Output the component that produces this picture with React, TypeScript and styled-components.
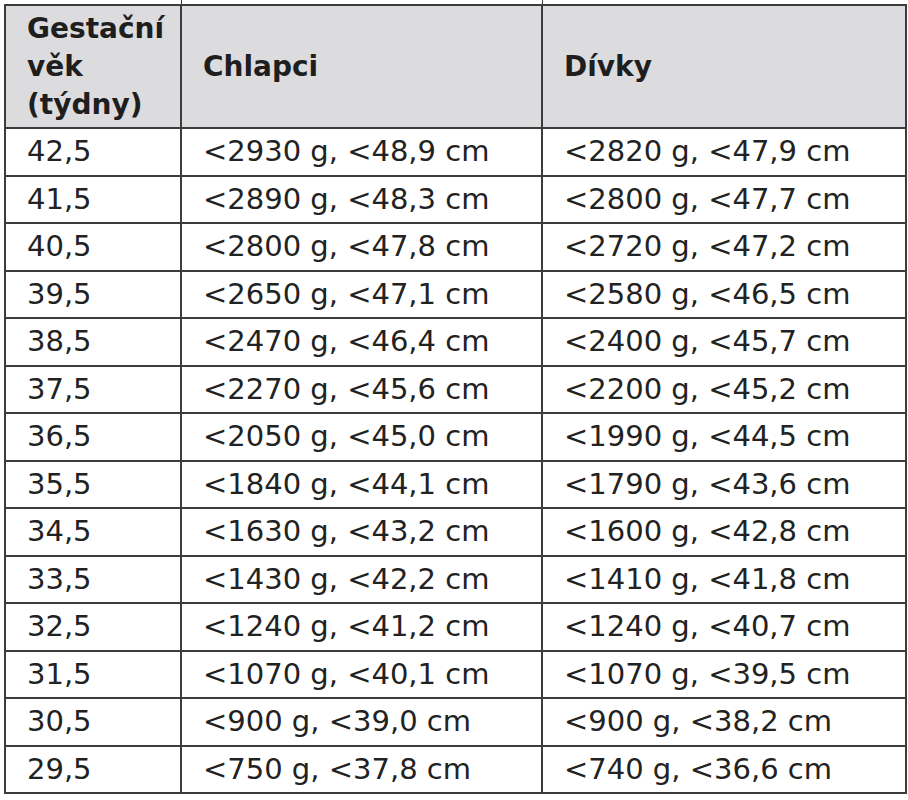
import React from 'react';
import styled, { createGlobalStyle } from 'styled-components';

const GlobalStyle = createGlobalStyle`
  html, body {
    margin: 0;
    padding: 0;
    background: #ffffff;
  }
  body {
    font-family: "DejaVu Sans", "Liberation Sans", sans-serif;
    color: #222;
  }
`;

const Page = styled.div`
  padding: 4px 0 0 4px;
`;

const Table = styled.table`
  border-collapse: collapse;
  table-layout: fixed;
  width: 901px;
`;

const HeadCell = styled.th`
  position: relative;
  background-color: #dcdcdf;
  border: 2px solid #3c3c3c;
  height: 121px;
  padding: 0 0 0 21px;
  text-align: left;
  vertical-align: middle;
  font-size: 28px;
  font-weight: 700;
  line-height: 38px;
  color: #1e1e1e;

  /* divider line runs a bit past the top edge */
  &:not(:first-child)::before {
    content: '';
    position: absolute;
    left: -1px;
    top: -6px;
    width: 1px;
    height: 6px;
    background: #3c3c3c;
  }
`;

const Cell = styled.td`
  border: 2px solid #3c3c3c;
  height: 45.5px;
  padding: 0 0 0 21px;
  font-size: 29px;
  line-height: 1;
  color: #222;
  vertical-align: middle;
  white-space: nowrap;
`;

const rows: [string, string, string][] = [
  ['42,5', '<2930 g, <48,9 cm', '<2820 g, <47,9 cm'],
  ['41,5', '<2890 g, <48,3 cm', '<2800 g, <47,7 cm'],
  ['40,5', '<2800 g, <47,8 cm', '<2720 g, <47,2 cm'],
  ['39,5', '<2650 g, <47,1 cm', '<2580 g, <46,5 cm'],
  ['38,5', '<2470 g, <46,4 cm', '<2400 g, <45,7 cm'],
  ['37,5', '<2270 g, <45,6 cm', '<2200 g, <45,2 cm'],
  ['36,5', '<2050 g, <45,0 cm', '<1990 g, <44,5 cm'],
  ['35,5', '<1840 g, <44,1 cm', '<1790 g, <43,6 cm'],
  ['34,5', '<1630 g, <43,2 cm', '<1600 g, <42,8 cm'],
  ['33,5', '<1430 g, <42,2 cm', '<1410 g, <41,8 cm'],
  ['32,5', '<1240 g, <41,2 cm', '<1240 g, <40,7 cm'],
  ['31,5', '<1070 g, <40,1 cm', '<1070 g, <39,5 cm'],
  ['30,5', '<900 g, <39,0 cm', '<900 g, <38,2 cm'],
  ['29,5', '<750 g, <37,8 cm', '<740 g, <36,6 cm'],
];

export default function App() {
  return (
    <Page>
      <GlobalStyle />
      <Table>
        <colgroup>
          <col style={{ width: 176 }} />
          <col style={{ width: 361 }} />
          <col style={{ width: 364 }} />
        </colgroup>
        <thead>
          <tr>
            <HeadCell>
              Gestační
              <br />
              věk
              <br />
              (týdny)
            </HeadCell>
            <HeadCell>Chlapci</HeadCell>
            <HeadCell>Dívky</HeadCell>
          </tr>
        </thead>
        <tbody>
          {rows.map(([age, boys, girls]) => (
            <tr key={age}>
              <Cell>{age}</Cell>
              <Cell>{boys}</Cell>
              <Cell>{girls}</Cell>
            </tr>
          ))}
        </tbody>
      </Table>
    </Page>
  );
}
